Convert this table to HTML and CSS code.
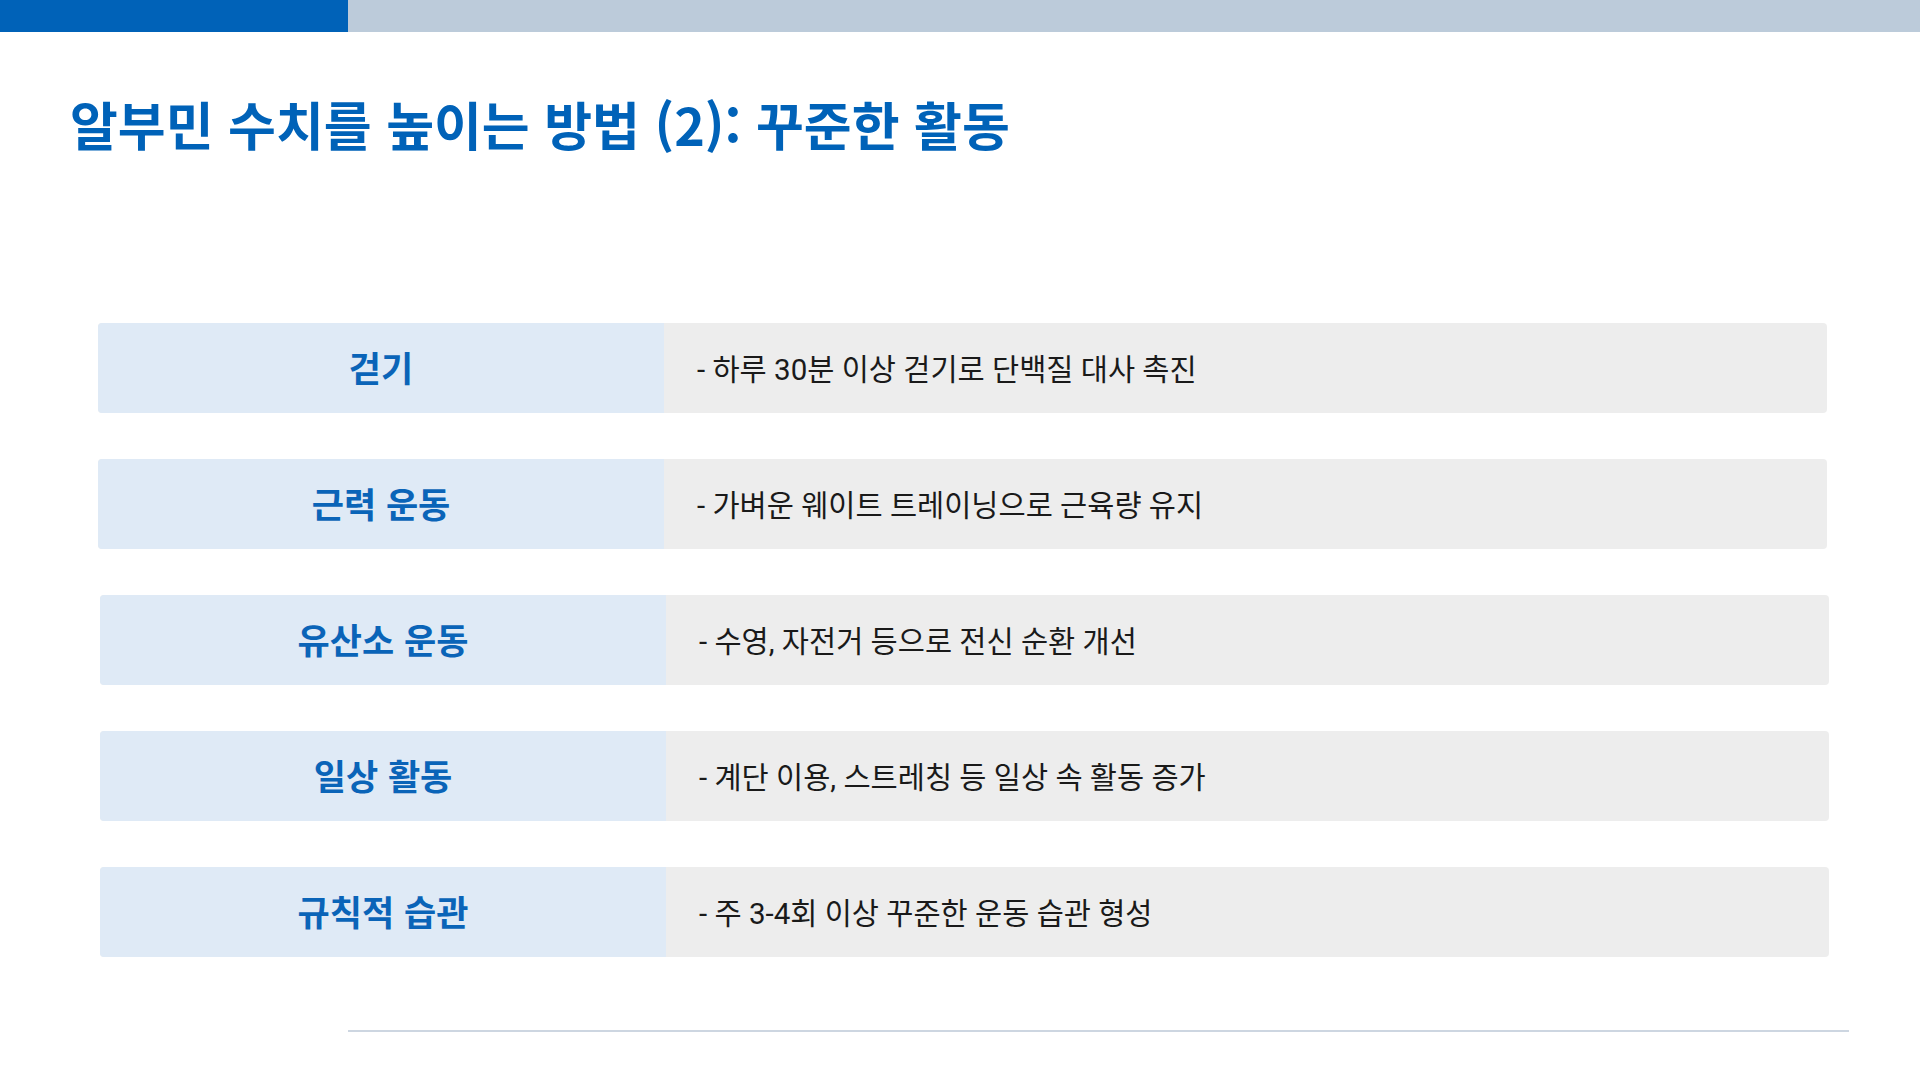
FILE: index.html
```html
<!DOCTYPE html>
<html lang="ko">
<head>
<meta charset="utf-8">
<title>알부민 수치를 높이는 방법 (2): 꾸준한 활동</title>
<link rel="stylesheet" href="styles.css">
</head>
<body>
<div class="topbar"><div class="topbar-accent"></div><div class="topbar-rest"></div></div>
<h1 class="title">알부민 수치를 높이는 방법 (2): 꾸준한 활동</h1>
<div class="rows">
  <div class="row"><div class="label">걷기</div><div class="desc">- 하루 30분 이상 걷기로 단백질 대사 촉진</div></div>
  <div class="row"><div class="label">근력 운동</div><div class="desc">- 가벼운 웨이트 트레이닝으로 근육량 유지</div></div>
  <div class="row row-shift"><div class="label">유산소 운동</div><div class="desc">- 수영, 자전거 등으로 전신 순환 개선</div></div>
  <div class="row row-shift"><div class="label">일상 활동</div><div class="desc">- 계단 이용, 스트레칭 등 일상 속 활동 증가</div></div>
  <div class="row row-shift"><div class="label">규칙적 습관</div><div class="desc">- 주 3-4회 이상 꾸준한 운동 습관 형성</div></div>
</div>
<div class="footer-line"></div>
</body>
</html>
```
FILE: styles.css
```css
html, body {
  margin: 0;
  padding: 0;
  background: #ffffff;
}
body {
  width: 1920px;
  height: 1080px;
  overflow: hidden;
  font-family: "Noto Sans CJK KR", "Noto Sans", sans-serif;
}
.topbar {
  display: flex;
  height: 32px;
}
.topbar-accent {
  width: 348px;
  background: #0062b8;
}
.topbar-rest {
  flex: 1;
  background: #bccbda;
}
.title {
  margin: 61px 0 0 70px;
  font-size: 52px;
  line-height: 1.2;
  font-weight: 700;
  color: #0062b8;
  letter-spacing: 0;
}
.rows {
  display: flex;
  flex-direction: column;
  align-items: flex-start;
  gap: 46px;
  margin: 168px 0 0 98px;
}
.row {
  display: flex;
  width: 1729px;
  height: 90px;
  border-radius: 4px;
  overflow: hidden;
  background: #ededed;
}
.row-shift {
  margin-left: 2px;
}
.label {
  width: 566px;
  flex: none;
  box-sizing: border-box;
  padding-bottom: 4px;
  background: #dfeaf6;
  display: flex;
  align-items: center;
  justify-content: center;
  font-size: 35px;
  font-weight: 700;
  color: #0a64b8;
}
.desc {
  flex: 1;
  display: flex;
  align-items: center;
  padding-left: 33px;
  padding-bottom: 3px;
  font-family: Roboto, "Noto Sans CJK KR", sans-serif;
  font-size: 29.5px;
  color: #1a1a1a;
}
.footer-line {
  margin: 73px 0 0 348px;
  width: 1501px;
  height: 2px;
  background: #cdd6e1;
}
```
